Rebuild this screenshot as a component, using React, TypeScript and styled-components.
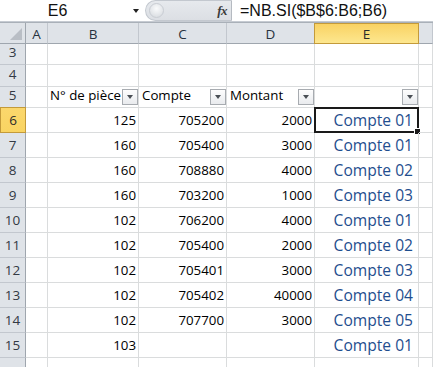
import React from "react";
import styled, { createGlobalStyle, css } from "styled-components";

const Global = createGlobalStyle`
  html, body { margin: 0; padding: 0; background: #ffffff; }
  body { width: 433px; height: 367px; overflow: hidden; }
`;

const Page = styled.div`
  width: 433px;
  height: 367px;
  overflow: hidden;
  display: flex;
  flex-direction: column;
  background: #fff;
`;

const FormulaBar = styled.div`
  height: 22px;
  display: flex;
  border-bottom: 1px solid #c6cbd2;
  box-sizing: border-box;
  font-family: "Liberation Sans", Arial, sans-serif;
`;

const NameBox = styled.div`
  width: 145px;
  display: flex;
  align-items: center;
  background: #fff;
`;

const NameText = styled.span`
  flex: 1;
  text-align: center;
  font-size: 16px;
  color: #111;
  padding-right: 18px;
  line-height: 21px;
`;

const Arrow = styled.span`
  width: 0;
  height: 0;
  border-left: 3.5px solid transparent;
  border-right: 3.5px solid transparent;
  border-top: 4px solid #222;
  margin-right: 6px;
`;

const FxArea = styled.div`
  width: 87px;
  display: flex;
  align-items: center;
  justify-content: space-between;
  background: linear-gradient(#e6e9ed, #dcdfe4);
  border-radius: 11px 0 0 11px;
  border: 1px solid #c3c8cf;
  border-right: 1px solid #b5bac1;
  box-sizing: border-box;
  padding: 0 4px 0 3px;
`;

const Knob = styled.span`
  width: 13px;
  height: 13px;
  border-radius: 50%;
  background: radial-gradient(circle at 50% 35%, #fafbfc, #d3d7dc);
  border: 1px solid #c9cdd3;
`;

const Fx = styled.span`
  font-family: "Liberation Serif", "Times New Roman", serif;
  font-style: italic;
  font-weight: bold;
  font-size: 13px;
  color: #3c3c3c;
  letter-spacing: -0.5px;
`;

const FormulaInput = styled.div`
  flex: 1;
  font-size: 16px;
  line-height: 21px;
  color: #111;
  padding-left: 8px;
  white-space: nowrap;
`;

const Spacer = styled.div`
  height: 2px;
  background: #fff;
`;

const Sheet = styled.div`
  display: grid;
  grid-template-columns: 26px 22px 91px 88px 88px 104px 14px;
  grid-template-rows: 21px 21px 22px 21px repeat(11, 25px);
  font-family: "Open Sans", "Noto Sans", sans-serif;
  font-size: 13.3px;
  color: #000;
  border-top: 1px solid #a9b0b8;
`;

const headerBase = css`
  background: #dfe3e8;
  box-sizing: border-box;
  color: #28323e;
  display: flex;
  align-items: center;
  justify-content: center;
  font-size: 13.5px;
`;

const Corner = styled.div`
  ${headerBase};
  border-right: 1px solid #9fa6ae;
  border-bottom: 1px solid #9fa6ae;
  position: relative;
`;

const CornerTri = styled.svg`
  position: absolute;
  right: 3px;
  bottom: 3px;
`;

const ColHead = styled.div<{ $sel?: boolean }>`
  ${headerBase};
  border-right: 1px solid #c2c7ce;
  border-bottom: 1px solid #9fa6ae;
  padding-top: 1px;
  ${(p) =>
    p.$sel &&
    css`
      background: linear-gradient(#f9d263, #fde78f);
      border: 1px solid #c39a3a;
      margin-left: -1px;
      color: #2b2b2b;
    `}
`;

const RowHead = styled.div<{ $sel?: boolean }>`
  ${headerBase};
  border-right: 1px solid #9fa6ae;
  border-bottom: 1px solid #c2c7ce;
  align-items: flex-end;
  padding-bottom: 3px;
  color: #333a44;
  ${(p) =>
    p.$sel &&
    css`
      background: linear-gradient(#fbd76c, #f9d462);
      border: 1px solid #c39a3a;
      margin-top: -1px;
      color: #2b2b2b;
    `}
`;

const Cell = styled.div<{ $align?: "left" | "right"; $big?: boolean; $sel?: boolean; $pl?: number }>`
  box-sizing: border-box;
  border-right: 1px solid #dadcdd;
  border-bottom: 1px solid #dadcdd;
  display: flex;
  align-items: flex-end;
  justify-content: ${(p) => (p.$align === "right" ? "flex-end" : "flex-start")};
  padding: 0 ${(p) => (p.$align === "right" ? (p.$big ? "5px" : "2px") : "0")} 3px
    ${(p) => (p.$align === "right" ? "0" : `${p.$pl ?? 2}px`)};
  white-space: nowrap;
  overflow: hidden;
  position: relative;
  line-height: 18px;
  ${(p) =>
    p.$big &&
    css`
      font-size: 15.6px;
      color: #1f4e8e;
      line-height: 20px;
      padding-bottom: 2px;
    `}
  ${(p) => p.$sel && css`overflow: visible;`}
`;

const CellText = styled.span`
  flex: 1;
  overflow: hidden;
  white-space: nowrap;
`;

const FilterBtn = styled.span`
  flex: none;
  width: 16px;
  height: 16px;
  box-sizing: border-box;
  border: 1px solid #a7abb0;
  background: linear-gradient(#fdfdfd, #e9ebee);
  margin: 0 0 -1px 0;
  display: flex;
  align-items: center;
  justify-content: center;
  &::after {
    content: "";
    border-left: 3.5px solid transparent;
    border-right: 3.5px solid transparent;
    border-top: 4px solid #4a4f55;
  }
`;

const SelBox = styled.span`
  position: absolute;
  left: -1px;
  top: -1px;
  right: -1px;
  bottom: -1px;
  border: 2px solid #1a1a1a;
  pointer-events: none;
  &::after {
    content: "";
    position: absolute;
    right: -4px;
    bottom: -4px;
    width: 5px;
    height: 5px;
    background: #1a1a1a;
    border: 1px solid #fff;
  }
`;

type Row = { n: number; label?: string; b?: string; c?: string; d?: string; e?: string };

const rows: Row[] = [
  { n: 6, b: "125", c: "705200", d: "2000", e: "Compte 01" },
  { n: 7, b: "160", c: "705400", d: "3000", e: "Compte 01" },
  { n: 8, b: "160", c: "708880", d: "4000", e: "Compte 02" },
  { n: 9, b: "160", c: "703200", d: "1000", e: "Compte 03" },
  { n: 10, b: "102", c: "706200", d: "4000", e: "Compte 01" },
  { n: 11, b: "102", c: "705400", d: "2000", e: "Compte 02" },
  { n: 12, b: "102", c: "705401", d: "3000", e: "Compte 03" },
  { n: 13, b: "102", c: "705402", d: "40000", e: "Compte 04" },
  { n: 14, b: "102", c: "707700", d: "3000", e: "Compte 05" },
  { n: 15, b: "103", e: "Compte 01" },
  { n: 16, label: "" },
];

export default function App() {
  return (
    <Page>
      <Global />
      <FormulaBar>
        <NameBox>
          <NameText>E6</NameText>
          <Arrow />
        </NameBox>
        <FxArea>
          <Knob />
          <Fx>fx</Fx>
        </FxArea>
        <FormulaInput>=NB.SI($B$6:B6;B6)</FormulaInput>
      </FormulaBar>
      <Spacer />
      <Sheet>
        <Corner>
          <CornerTri width="12" height="12" viewBox="0 0 12 12">
            <polygon points="12,0 12,12 0,12" fill="#b9bec5" />
          </CornerTri>
        </Corner>
        <ColHead>A</ColHead>
        <ColHead>B</ColHead>
        <ColHead>C</ColHead>
        <ColHead>D</ColHead>
        <ColHead $sel>E</ColHead>
        <ColHead />

        {[3, 4].map((n) => (
          <React.Fragment key={n}>
            <RowHead>{n}</RowHead>
            <Cell />
            <Cell />
            <Cell />
            <Cell />
            <Cell />
            <Cell />
          </React.Fragment>
        ))}

        <RowHead>5</RowHead>
        <Cell />
        <Cell>
          <CellText>N° de pièce</CellText>
          <FilterBtn />
        </Cell>
        <Cell $pl={3}>
          <CellText>Compte</CellText>
          <FilterBtn />
        </Cell>
        <Cell $pl={3}>
          <CellText>Montant</CellText>
          <FilterBtn />
        </Cell>
        <Cell>
          <CellText />
          <FilterBtn />
        </Cell>
        <Cell />

        {rows.map((r) => (
          <React.Fragment key={r.n}>
            <RowHead $sel={r.n === 6}>{r.label ?? r.n}</RowHead>
            <Cell />
            <Cell $align="right">{r.b}</Cell>
            <Cell $align="right">{r.c}</Cell>
            <Cell $align="right">{r.d}</Cell>
            <Cell $align="right" $big $sel={r.n === 6}>
              {r.e}
              {r.n === 6 && <SelBox />}
            </Cell>
            <Cell />
          </React.Fragment>
        ))}
      </Sheet>
    </Page>
  );
}
